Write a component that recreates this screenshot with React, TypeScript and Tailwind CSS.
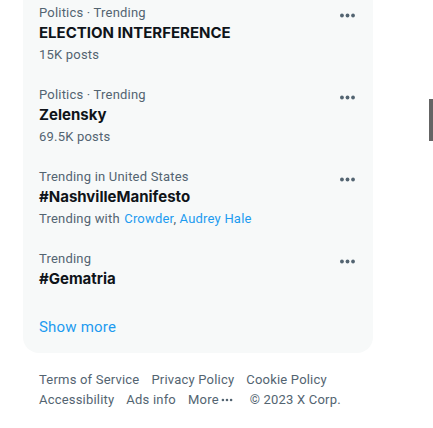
import React from "react";

const font = { fontFamily: "Roboto, 'Liberation Sans', Arial, sans-serif" };
const boldFont = { fontFamily: "Inter, Roboto, 'Liberation Sans', Arial, sans-serif" };

function Dots({ className = "", r = 2.4 }: { className?: string; r?: number }) {
  return (
    <svg viewBox="0 0 24 24" className={className} fill="#536471" aria-hidden>
      <circle cx="5" cy="12" r={r} />
      <circle cx="12" cy="12" r={r} />
      <circle cx="19" cy="12" r={r} />
    </svg>
  );
}

type Trend = { cat: string; title: string; sub?: React.ReactNode };

const trends: Trend[] = [
  { cat: "Politics · Trending", title: "ELECTION INTERFERENCE", sub: "15K posts" },
  { cat: "Politics · Trending", title: "Zelensky", sub: "69.5K posts" },
  {
    cat: "Trending in United States",
    title: "#NashvilleManifesto",
    sub: (
      <>
        Trending with{" "}
        <span className="text-[#1d9bf0] ml-[1px]">Crowder</span>,{" "}
        <span className="text-[#1d9bf0]">Audrey Hale</span>
      </>
    ),
  },
  { cat: "Trending", title: "#Gematria" },
];

export default function App() {
  return (
    <div className="relative w-[433px] h-[428px] overflow-hidden bg-white tracking-[0.2px]" style={font}>
      <div className="ml-[23px] w-[350px] -mt-[7px] bg-[#f7f9f9] rounded-b-2xl">
        {trends.map((t, i) => (
          <div key={i} className="flex px-4 py-3">
            <div className="flex-1 min-w-0">
              <div className="text-[13px] leading-4 text-[#536471]">{t.cat}</div>
              <div
                className="pt-[2px] text-[15px] leading-5 font-bold text-[#0f1419] tracking-normal"
                style={boldFont}
              >
                {t.title}
              </div>
              {t.sub && <div className="pt-1 text-[13px] leading-4 text-[#536471]">{t.sub}</div>}
            </div>
            <div className="flex items-start pt-[1px]">
              <Dots className="w-[19px] h-[19px]" />
            </div>
          </div>
        ))}
        <div className="p-4 text-[15px] leading-5 text-[#1d9bf0]">Show more</div>
      </div>
      <div className="px-4 ml-[23px] w-[350px] pt-[17px] text-[13px] leading-4 text-[#536471] flex flex-wrap">
        {["Terms of Service", "Privacy Policy", "Cookie Policy"].map((s) => (
          <span key={s} className="mr-3 my-[2px]">{s}</span>
        ))}
        <span className="w-full" />
        <span className="mr-3 my-[2px]">Accessibility</span>
        <span className="mr-3 my-[2px]">Ads info</span>
        <span className="mr-4 my-[2px] flex items-center">
          More
          <Dots className="w-[14px] h-[14px] ml-[1px]" r={2.2} />
        </span>
        <span className="mr-3 my-[2px]">© 2023 X Corp.</span>
      </div>
      <div className="absolute left-[429px] top-[99px] w-[4px] h-[42px] bg-[#646464]" />
    </div>
  );
}
